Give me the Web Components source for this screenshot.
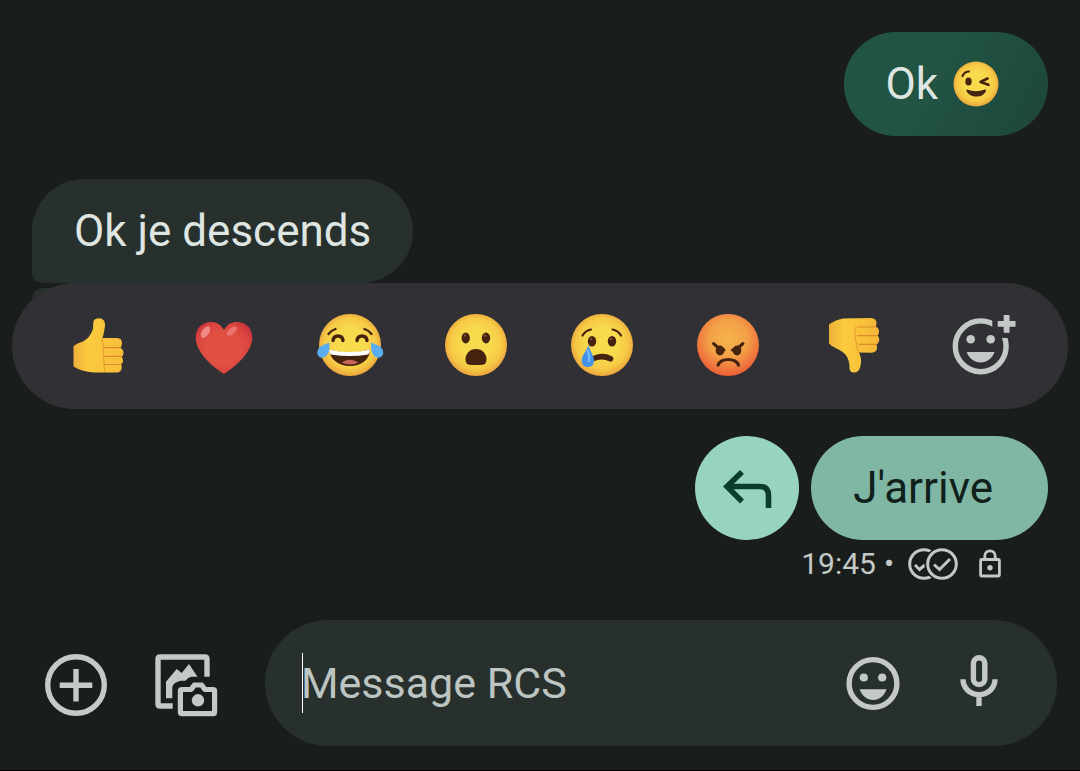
<!DOCTYPE html>
<html lang="fr">
<head>
<meta charset="utf-8">
<meta name="viewport" content="width=device-width, initial-scale=1">
<title>Messages</title>
<style>
  :root {
    --bg: #191d1b;
    --surface: #28302d;
    --bar: #313135;
    --ink: #dfe5e1;
    --icon: #c3c9c6;
    --mint: #97d4be;
    --mint-dim: #80b6a4;
  }

  body {
    margin: 0;
    background: var(--bg);
    color: var(--ink);
    font-family: Roboto, "Liberation Sans", sans-serif;
  }
</style>
</head>
<body>
<chat-screen>
  <chat-bubble side="out">Ok <chat-icon name="wink" label="clin d'œil"></chat-icon></chat-bubble>
  <chat-bubble side="in">Ok je descends</chat-bubble>
  <reaction-bar></reaction-bar>
  <reply-row>J'arrive</reply-row>
  <message-status time="19:45"></message-status>
  <message-composer slot="footer" placeholder="Message RCS"></message-composer>
</chat-screen>

<script>
const FACE = '<circle cx="33" cy="33" r="31" fill="url(#face)"/>';
const FACE_FILL = `
  <defs><radialGradient id="face" cx=".5" cy=".48" r=".55">
    <stop offset=".45" stop-color="#f8da4d"/>
    <stop offset=".75" stop-color="#f6c945"/>
    <stop offset="1" stop-color="#e79b3b"/>
  </radialGradient></defs>`;

const ICONS = {
  wink: {
    size: [48, 48],
    body: `${FACE_FILL}
      <circle cx="24" cy="24" r="22.5" fill="url(#face)"/>
      <g fill="none" stroke="#46230f" stroke-linecap="round" stroke-linejoin="round">
        <path d="M10.500 16q2-4.500 6.500-4.500" stroke-width="2.200"/>
        <path d="M35.500 18.500l-7 3.500 8 2.800" stroke-width="2.600"/>
      </g>
      <ellipse cx="16.500" cy="21.500" rx="3.200" ry="3.900" fill="#46230f"/>
      <path d="M15 29.500q9 3.500 18 0 1.500-.3 1 1.200c-1.500 4-5 5.800-9.500 5.800s-8.500-2-10-5.500q-.6-1.600.5-1.500z" fill="#46230f"/>`,
  },
  like: {
    size: [68, 68],
    body: `
      <defs><linearGradient id="hand" x1="0" x2="1">
        <stop offset="0" stop-color="#eeb03a"/><stop offset=".3" stop-color="#fbcb3f"/><stop offset="1" stop-color="#f6bd38"/>
      </linearGradient></defs>
      <path d="M8.500 34Q12 31 18 29.500 25 26 28 17q.2-4 .4-7Q29 6.300 34 6.300c4 0 6.300 3 6 7.200-.5 5-1.500 9-2.500 12.500H52q5 .2 5 5 0 3-1.700 4.800Q58.500 37.500 58.500 41q0 2.500-1.800 4 1.500 1.500 1.300 4-.2 2.500-2 3.500 1 1 .7 3.500-.7 4.500-5 4.500H29q-13-1-20.500-6z" fill="url(#hand)"/>
      <path d="M39 35.600h15.500M39 44.300H56M39 52.500h15.500" fill="none" stroke="#dc8b2c" stroke-width="1.200" stroke-linecap="round"/>
      <path d="M37.500 26.500q-.8 4 1 6.500-1.500 2 0 5.500-1.500 2 .5 6.500-1 2.500.5 7.500-1 3 .5 7" fill="none" stroke="#e39a30" stroke-width="1" stroke-linecap="round"/>`,
  },
  heart: {
    size: [68, 68],
    body: `
      <defs><radialGradient id="love" cx=".48" cy=".5" r=".58">
        <stop offset=".5" stop-color="#e05143"/><stop offset=".8" stop-color="#dc453f"/><stop offset="1" stop-color="#c9353b"/>
      </radialGradient></defs>
      <path d="M33 18C29 11 24 9.500 19 10 10 10.500 4.700 17 4.700 26c0 12 13.500 27 28.300 36C47.500 53 61.300 38 61.300 26c0-9-5.300-15.500-14.300-16-5-.5-10 1-14 8z" fill="url(#love)"/>
      <ellipse cx="14.500" cy="20" rx="3.600" ry="6.500" transform="rotate(35 14.500 20)" fill="#f49c96" opacity=".8"/>
      <ellipse cx="41" cy="19" rx="3" ry="6.200" transform="rotate(50 41 19)" fill="#f07f79" opacity=".8"/>`,
  },
  joy: {
    size: [68, 68],
    body: `${FACE_FILL}${FACE}
      <g fill="none" stroke="#46230f" stroke-linecap="round">
        <path d="M11.500 22q2.500-3.500 7-5M47.500 17q4.500 1.500 7 5" stroke-width="2.300"/>
        <path d="M16 28.500q.5-4.500 5-4.500t5 4.500M40 28.500q.5-4.500 5-4.500t5 4.500" stroke-width="3.400"/>
      </g>
      <path d="M12 37.500q21 6 41 0C53 47 45 54 33 54S13 47 12 37.500z" fill="#46230f"/>
      <path d="M12 37.500q21 5 41 0-.2 3.500-2 5-18 3-37 0-2-1.500-2-5z" fill="#fff"/>
      <path d="M24.500 50.500q8-5.500 17 0Q34 54.500 24.500 50.500z" fill="#c8655b"/>
      <path d="M12.500 30.500c0 6 .2 12.500-6 15-4.500 1-7.500-3-5.700-7.500 2-5 7.500-5.500 11.700-7.500z" fill="#5aaef0"/>
      <path d="M54 30.500c0 6-.2 12.500 6 15 4.500 1 7.500-3 5.700-7.500-2-5-7.500-5.500-11.700-7.500z" fill="#5aaef0"/>`,
  },
  wow: {
    size: [68, 68],
    body: `${FACE_FILL}${FACE}
      <g fill="#46230f">
        <ellipse cx="22.700" cy="26" rx="4.200" ry="5.400"/><ellipse cx="43" cy="26" rx="4.200" ry="5.400"/>
        <path d="M33 37c6.500 0 10.500 5 10.500 10.500 0 3.200-1.500 4.800-4 5.200q-6.500.8-13 0c-2.500-.4-4-2-4-5.200C22.500 42 26.500 37 33 37z"/>
      </g>
      <g fill="#7b5138"><circle cx="21.800" cy="23.500" r="1.200"/><circle cx="42" cy="23.500" r="1.200"/></g>`,
  },
  cry: {
    size: [68, 68],
    body: `${FACE_FILL}${FACE}
      <g fill="none" stroke="#46230f" stroke-linecap="round">
        <path d="M13.500 23.500q3-5 8.500-6M43.500 17.500q5.500 1 8.500 6" stroke-width="2.200"/>
        <path d="M26 46q8-3 15.500.8" stroke-width="5.600"/>
      </g>
      <g fill="#46230f"><ellipse cx="23" cy="29.300" rx="4.200" ry="5.200"/><ellipse cx="43" cy="29.300" rx="4.200" ry="5.200"/></g>
      <g fill="#7b5138"><circle cx="22" cy="27" r="1.200"/><circle cx="42" cy="27" r="1.200"/></g>
      <path d="M19.500 33c1.500 6 5.500 10.500 5.500 15.500 0 4.500-2.500 6.500-6.200 6.500-3.800 0-6.200-2.500-6.200-6.500 0-5 4.900-9.500 6.900-15.500z" fill="#4492ea"/>
      <path d="M19 39q2 5 1 10" fill="none" stroke="#74b8f6" stroke-width="2.500" stroke-linecap="round"/>`,
  },
  angry: {
    size: [68, 68],
    body: `
      <defs><radialGradient id="mad" cx=".5" cy=".4" r=".62">
        <stop offset="0" stop-color="#f5b44d"/><stop offset=".5" stop-color="#f3a047"/><stop offset="1" stop-color="#ed5a37"/>
      </radialGradient></defs>
      <circle cx="33" cy="33" r="31" fill="url(#mad)"/>
      <g fill="#46230f"><ellipse cx="25" cy="38.500" rx="4.300" ry="5"/><ellipse cx="42" cy="38.500" rx="4.300" ry="5"/></g>
      <g fill="none" stroke="#46230f" stroke-linecap="round">
        <path d="M18.500 31.500q4 4.500 10.500 6.500M48 31.500q-4 4.500-10.500 6.500" stroke-width="3"/>
        <path d="M23 53q2.500-5.500 10.300-5.500T43.500 53" stroke-width="3.200"/>
      </g>`,
  },
  dislike: {
    size: [68, 68],
    body: `
      <defs><linearGradient id="hand" x1="0" x2="1">
        <stop offset="0" stop-color="#eeb03a"/><stop offset=".3" stop-color="#fbcb3f"/><stop offset="1" stop-color="#f6b636"/>
      </linearGradient></defs>
      <path d="M8 12.500Q14 8 22 6.500L50 6q5.500.3 5.500 5 0 2-.7 3.700 3.200 1.300 3.200 4.800 0 2.500-1.500 4 2 1.500 1.800 4.500-.3 3.500-3 4.500 1 1.500.7 4-.7 4-5 4.200l-13-.2q2.300 4.500 2.100 9-.4 10.500-6.600 11-4.500.3-5-4 .2-8-3-12.500-3.500-5-10-7.500-5-2-7.500-5z" fill="url(#hand)"/>
      <path d="M37 15h17.500M37 23.700h19M38 32.300h17" fill="none" stroke="#dc8b2c" stroke-width="1.200" stroke-linecap="round"/>
      <path d="M35 15q-3 3 0 8.500-2.500 3.500 1 8.800-1 3.500 2 8.500" fill="none" stroke="#e39a30" stroke-width="1" stroke-linecap="round"/>`,
  },
  addReaction: {
    size: [68, 68],
    body: `
      <clipPath id="notch"><path d="M0 0h45.300v26H68v42H0z"/></clipPath>
      <circle cx="33.700" cy="34.300" r="25.400" clip-path="url(#notch)" fill="none" stroke="currentColor" stroke-width="5.400"/>
      <g fill="currentColor">
        <circle cx="23.700" cy="27.300" r="4.300"/><circle cx="43.700" cy="27.300" r="4.300"/>
        <path d="M19.700 40h27.800c-2 6.300-7.500 10.500-13.900 10.500S21.700 46.300 19.700 40z"/>
        <path d="M56.700 3h5.800v6h6v5.800h-6v6h-5.800v-6h-6V9h6z"/>
      </g>`,
  },
  reply: {
    size: [48, 48],
    body: '<path d="M19 8L4 22.500 19 37.500M4 22.500h33q8.500 0 8.500 9V44" fill="none" stroke="currentColor" stroke-width="5.600"/>',
  },
  read: {
    size: [50, 32],
    body: `
      <mask id="behind"><path d="M0 0h50v32H0z" fill="#fff"/><circle cx="34" cy="16" r="17.500"/></mask>
      <g fill="none" stroke="currentColor" stroke-width="3">
        <g mask="url(#behind)"><circle cx="16" cy="16" r="14.300"/><path d="M7 17l4.500 4.500L17 17"/></g>
        <circle cx="34" cy="16" r="14.300"/><path d="M26 16.500l5.500 5L42 11"/>
      </g>`,
  },
  lock: {
    size: [24, 32],
    body: `
      <g fill="none" stroke="currentColor" stroke-width="2.800">
        <rect x="2.600" y="11.500" width="18.800" height="16.500" rx="1"/>
        <path d="M6.800 11.500V8a5.200 5.200 0 0 1 10.400 0v3.500"/>
      </g>
      <circle cx="12" cy="19.800" r="2.700" fill="currentColor"/>`,
  },
  add: {
    size: [62, 62],
    body: `
      <g fill="none" stroke="currentColor" stroke-width="5.400">
        <circle cx="31" cy="31" r="28.300"/><path d="M31 15v32.600M14.700 31.300h32.600"/>
      </g>`,
  },
  gallery: {
    size: [62, 62],
    body: `
      <path d="M17.700 52H5Q3 52 3 50V5q0-2 2-2h45q2 0 2 2v17.700" fill="none" stroke="currentColor" stroke-width="5.400"/>
      <path d="M11 44.300V27.700L21.700 15l5 4L34 10l8.500 12.700H36q-3.500 1-5.500 4h-4.700Q18.500 28 17.300 33v11.300z" fill="currentColor"/>
      <path d="M27 35.500h8q1.500 0 2.500-2l2-2.500h7l2 2.500q1 2 2.500 2h7q1.600 0 1.600 1.600v21q0 1.600-1.600 1.600H27q-1.600 0-1.600-1.600v-21q0-1.600 1.600-1.600z" fill="none" stroke="currentColor" stroke-width="5.200"/>
      <circle cx="43" cy="46.300" r="6.200" fill="currentColor"/>`,
  },
  smile: {
    size: [64, 64],
    body: `
      <circle cx="32" cy="32.500" r="23.900" fill="none" stroke="currentColor" stroke-width="5.400"/>
      <g fill="currentColor">
        <circle cx="22.800" cy="26.500" r="4.100"/><circle cx="41.200" cy="26.500" r="4.100"/>
        <path d="M18.700 38.200h26.800c-2 6.300-7.200 10.800-13.400 10.800s-11.400-4.500-13.400-10.800z"/>
      </g>`,
  },
  mic: {
    size: [64, 64],
    body: `
      <g fill="none" stroke="currentColor" stroke-width="5.400">
        <rect x="26.400" y="6.700" width="11.400" height="26.900" rx="5.700"/>
        <path d="M16 28.300c0 8.700 7 15.300 16 15.300s16-6.600 16-15.300M32 43v12"/>
      </g>`,
  },
};

class ChatIcon extends HTMLElement {
  constructor() {
    super();
    this.attachShadow({ mode: "open" });
  }

  connectedCallback() {
    const { size, body } = ICONS[this.getAttribute("name")];
    const [w, h] = size;
    const label = this.getAttribute("label");
    this.shadowRoot.innerHTML = `
      <style>
        :host { display: inline-block; vertical-align: middle; flex: none; }
        svg { display: block; overflow: visible; }
      </style>
      <svg width="${w}" height="${h}" viewBox="0 0 ${w} ${h}" ${label ? `role="img" aria-label="${label}"` : 'aria-hidden="true"'}>${body}</svg>
    `;
  }
}

class ChatScreen extends HTMLElement {
  constructor() {
    super();
    this.attachShadow({ mode: "open" }).innerHTML = `
      <style>
        :host {
          display: flex;
          flex-direction: column;
          box-sizing: border-box;
          min-height: 100vh;
          padding-top: 32px;
          border-bottom: 1px solid #000;
        }

        main {
          display: flex;
          flex-direction: column;
        }

        footer {
          margin-top: auto;
          padding: 24px 23px 24px 45px;
        }
      </style>
      <main><slot></slot></main>
      <footer><slot name="footer"></slot></footer>
    `;
  }
}

class ChatBubble extends HTMLElement {
  constructor() {
    super();
    this.attachShadow({ mode: "open" }).innerHTML = `
      <style>
        :host {
          display: block;
          margin: 0 32px;
          padding: 26px 42px;
          border-radius: 52px;
          font-size: 44px;
          line-height: 52px;
        }

        :host([side="out"]) {
          align-self: flex-end;
          margin-bottom: 43px;
          background: linear-gradient(120deg, #225444 40%, #1d4639);
        }

        :host([side="in"]) {
          align-self: flex-start;
          border-bottom-left-radius: 10px;
          background: var(--surface);
        }

        :host([side="sent"]) {
          margin: 0;
          padding-right: 55px;
          background: var(--mint-dim);
          color: #10211b;
        }

        ::slotted(chat-icon) {
          margin: -6px 6px 0 3px;
        }
      </style>
      <slot></slot>
    `;
  }
}

class ReactionBar extends HTMLElement {
  constructor() {
    super();
    this.attachShadow({ mode: "open" });
  }

  connectedCallback() {
    const reactions = [
      ["like", "J'aime"],
      ["heart", "J'adore"],
      ["joy", "Haha"],
      ["wow", "Surpris"],
      ["cry", "Triste"],
      ["angry", "En colère"],
      ["dislike", "Je n'aime pas"],
      ["addReaction", "Ajouter une réaction"],
    ];
    this.shadowRoot.innerHTML = `
      <style>
        :host {
          display: flex;
          position: relative;
          margin: 0 12px;
          padding: 0 24px;
          border-radius: 63px;
          background: var(--bar);
          color: var(--icon);
        }

        /* top corner of the next bubble, which the bar covers */
        :host::before {
          content: "";
          position: absolute;
          z-index: -1;
          top: 5px;
          left: 20px;
          width: 120px;
          height: 60px;
          border-radius: 10px;
          background: var(--surface);
        }

        button {
          flex: 1;
          display: flex;
          justify-content: center;
          padding: 29px 0;
          border: 0;
          background: none;
          color: inherit;
        }
      </style>
      ${reactions
        .map(
          ([name, label]) =>
            `<button type="button" aria-label="${label}"><chat-icon name="${name}"></chat-icon></button>`,
        )
        .join("")}
    `;
  }
}

class ReplyRow extends HTMLElement {
  constructor() {
    super();
    this.attachShadow({ mode: "open" }).innerHTML = `
      <style>
        :host {
          display: flex;
          justify-content: flex-end;
          gap: 12px;
          margin: 27px 32px 0;
        }

        button {
          display: flex;
          align-items: center;
          justify-content: center;
          width: 104px;
          padding: 0;
          border: 0;
          border-radius: 50%;
          background: var(--mint);
          color: #0b3d2d;
        }
      </style>
      <button type="button" aria-label="Répondre"><chat-icon name="reply"></chat-icon></button>
      <chat-bubble side="sent"><slot></slot></chat-bubble>
    `;
  }
}

class MessageStatus extends HTMLElement {
  constructor() {
    super();
    this.attachShadow({ mode: "open" });
  }

  connectedCallback() {
    this.shadowRoot.innerHTML = `
      <style>
        :host {
          display: flex;
          align-items: center;
          justify-content: flex-end;
          margin: 8px 78px 0;
          color: var(--icon);
          font-size: 30px;
          line-height: 32px;
        }

        .dot { margin: 0 14px 0 8px; }
        chat-icon + chat-icon { margin-left: 20px; }
      </style>
      <time>${this.getAttribute("time")}</time>
      <span class="dot">•</span>
      <chat-icon name="read" label="Lu"></chat-icon>
      <chat-icon name="lock" label="Chiffré"></chat-icon>
    `;
  }
}

class MessageComposer extends HTMLElement {
  constructor() {
    super();
    this.attachShadow({ mode: "open" });
  }

  connectedCallback() {
    const placeholder = this.getAttribute("placeholder");
    this.shadowRoot.innerHTML = `
      <style>
        :host {
          display: flex;
          align-items: center;
          gap: 48px;
          color: var(--icon);
        }

        button {
          flex: none;
          padding: 0;
          border: 0;
          background: none;
          color: inherit;
        }

        .action { padding-top: 4px; }

        .field {
          flex: 1;
          display: flex;
          align-items: center;
          gap: 42px;
          min-width: 0;
          padding: 31px 46px 31px 36px;
          border-radius: 63px;
          background: var(--surface);
        }

        label {
          position: relative;
          flex: 1;
          display: flex;
          min-width: 0;
        }

        .caret {
          position: absolute;
          top: 2px;
          bottom: 2px;
          left: 1px;
          width: 1px;
          background: #fff;
        }

        input {
          flex: 1;
          min-width: 0;
          height: 64px;
          padding: 0;
          border: 0;
          outline: 0;
          background: none;
          color: var(--ink);
          font: inherit;
          font-size: 43px;
        }

        input::placeholder {
          color: #bcc5c1;
          opacity: 1;
        }
      </style>
      <button class="action" type="button" aria-label="Ajouter"><chat-icon name="add"></chat-icon></button>
      <button class="action" type="button" aria-label="Galerie"><chat-icon name="gallery"></chat-icon></button>
      <div class="field">
        <label>
          <span class="caret"></span>
          <input type="text" placeholder="${placeholder}" aria-label="${placeholder}">
        </label>
        <button type="button" aria-label="Emoji"><chat-icon name="smile"></chat-icon></button>
        <button type="button" aria-label="Dicter"><chat-icon name="mic"></chat-icon></button>
      </div>
    `;
  }
}

customElements.define("chat-icon", ChatIcon);
customElements.define("chat-screen", ChatScreen);
customElements.define("chat-bubble", ChatBubble);
customElements.define("reaction-bar", ReactionBar);
customElements.define("reply-row", ReplyRow);
customElements.define("message-status", MessageStatus);
customElements.define("message-composer", MessageComposer);
</script>
</body>
</html>
